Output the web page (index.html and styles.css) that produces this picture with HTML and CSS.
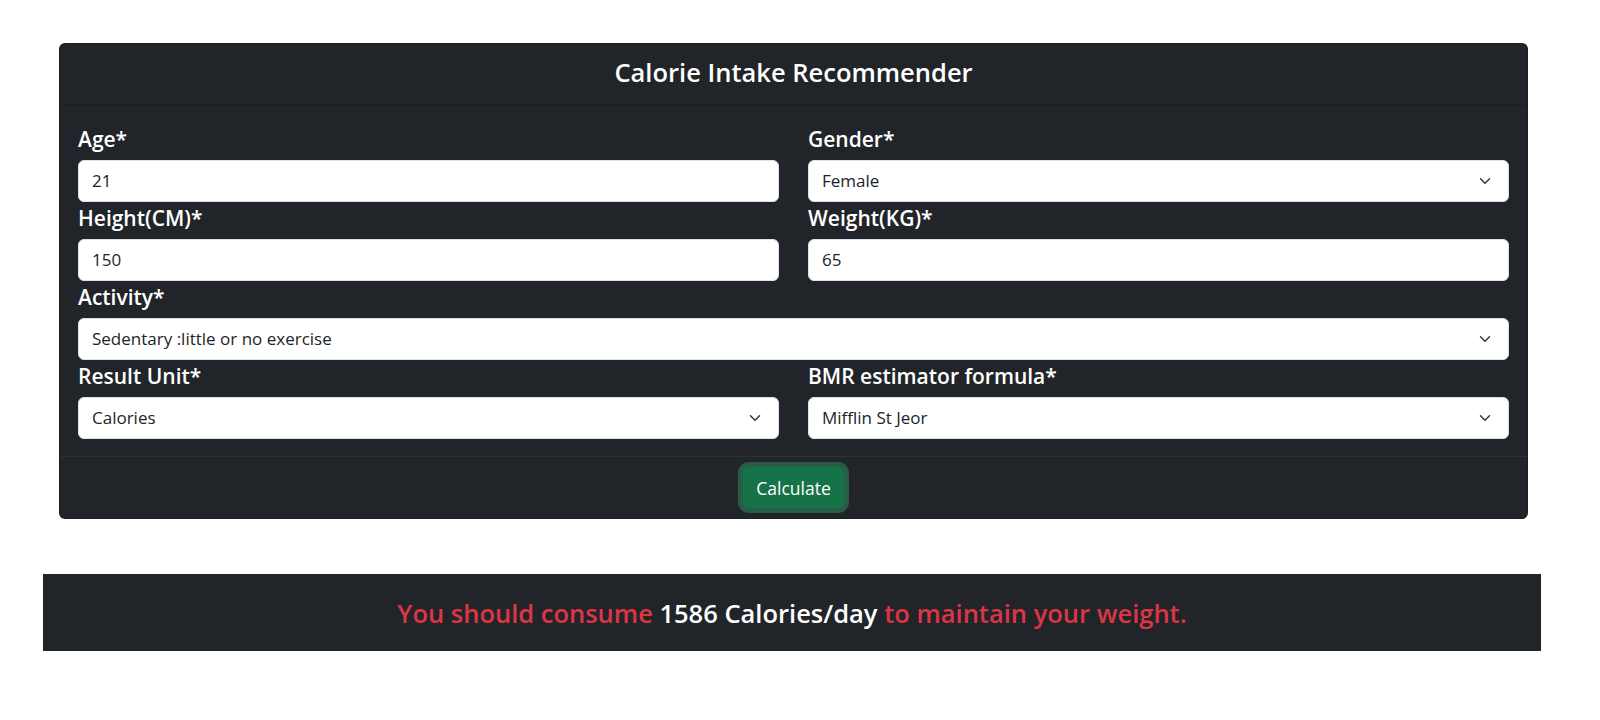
FILE: index.html
```html
<!DOCTYPE html>
<html lang="en">
<head>
<meta charset="utf-8">
<title>Calorie Intake Recommender</title>
<link rel="stylesheet" href="styles.css">
</head>
<body>
<div class="page">
  <div class="card">
    <div class="card-header"><h1 class="title">Calorie Intake Recommender</h1></div>
    <div class="card-body">
      <div class="grid">
        <div class="field">
          <label class="label">Age*</label>
          <div class="control">21</div>
        </div>
        <div class="field">
          <label class="label">Gender*</label>
          <div class="control select"><span>Female</span><svg class="chev" width="16" height="12" viewBox="0 0 16 16"><path d="m2 5 6 6 6-6" fill="none" stroke="#343a40" stroke-width="2" stroke-linecap="round" stroke-linejoin="round"/></svg></div>
        </div>
        <div class="field">
          <label class="label">Height(CM)*</label>
          <div class="control">150</div>
        </div>
        <div class="field">
          <label class="label">Weight(KG)*</label>
          <div class="control">65</div>
        </div>
        <div class="field wide">
          <label class="label">Activity*</label>
          <div class="control select"><span>Sedentary :little or no exercise</span><svg class="chev" width="16" height="12" viewBox="0 0 16 16"><path d="m2 5 6 6 6-6" fill="none" stroke="#343a40" stroke-width="2" stroke-linecap="round" stroke-linejoin="round"/></svg></div>
        </div>
        <div class="field">
          <label class="label">Result Unit*</label>
          <div class="control select"><span>Calories</span><svg class="chev" width="16" height="12" viewBox="0 0 16 16"><path d="m2 5 6 6 6-6" fill="none" stroke="#343a40" stroke-width="2" stroke-linecap="round" stroke-linejoin="round"/></svg></div>
        </div>
        <div class="field">
          <label class="label">BMR estimator formula*</label>
          <div class="control select"><span>Mifflin St Jeor</span><svg class="chev" width="16" height="12" viewBox="0 0 16 16"><path d="m2 5 6 6 6-6" fill="none" stroke="#343a40" stroke-width="2" stroke-linecap="round" stroke-linejoin="round"/></svg></div>
        </div>
      </div>
    </div>
    <div class="card-footer"><button class="btn">Calculate</button></div>
  </div>
  <div class="result"><span class="red">You should consume </span><span class="white">1586 Calories/day</span><span class="red"> to maintain your weight.</span></div>
</div>
</body>
</html>
```
FILE: styles.css
```css
* { box-sizing: border-box; }
body {
  margin: 0;
  background: #fff;
  font-family: "Open Sans", "Noto Sans", sans-serif;
  color: #212529;
}
.page {
  width: 1498px;
  margin-left: 43px;
  padding-top: 43px;
}
.card {
  margin: 0 13px 0 16px;
  background: #212529;
  border: 1px solid rgba(0,0,0,.175);
  border-radius: 6px;
  color: #fff;
}
.card-header {
  height: 61px;
  border-bottom: 1px solid #1b1e22;
  text-align: center;
  padding-bottom: 4px;
}
.title {
  margin: 0;
  font-size: 25.5px;
  font-weight: 600;
  line-height: 56px;
}
.card-body {
  padding: 18px 18px 17px;
}
.grid {
  display: grid;
  grid-template-columns: 1fr 1fr;
  column-gap: 29px;
}
.wide { grid-column: 1 / span 2; }
.label {
  display: block;
  font-size: 21px;
  font-weight: 600;
  line-height: 28px;
  padding-top: 2px;
  margin-bottom: 7px;
}
.control {
  height: 42px;
  background: #fff;
  border: 1px solid #dee2e6;
  border-radius: 6px;
  padding: 0 13px;
  font-size: 17px;
  line-height: 40px;
  color: #212529;
}
.select {
  display: flex;
  align-items: center;
  justify-content: space-between;
  padding-right: 15px;
}
.chev { display: block; }
.card-footer {
  border-top: 1px solid #2b3035;
  padding: 9px 0;
  display: flex;
  justify-content: center;
}
.btn {
  height: 43px;
  padding: 0 13px;
  background: #157347;
  color: #fff;
  border: 1px solid #146c43;
  border-radius: 7px;
  font-family: "Open Sans", "Noto Sans", sans-serif;
  font-size: 17.5px;
  box-shadow: 0 0 0 4px rgba(60,153,110,.45);
}
.result {
  margin-top: 55px;
  height: 77px;
  background: #212529;
  text-align: center;
  padding-top: 2px;
  line-height: 75px;
  font-size: 25.5px;
  font-weight: 600;
}
.red { color: #dc3545; }
.white { color: #fff; }
```
